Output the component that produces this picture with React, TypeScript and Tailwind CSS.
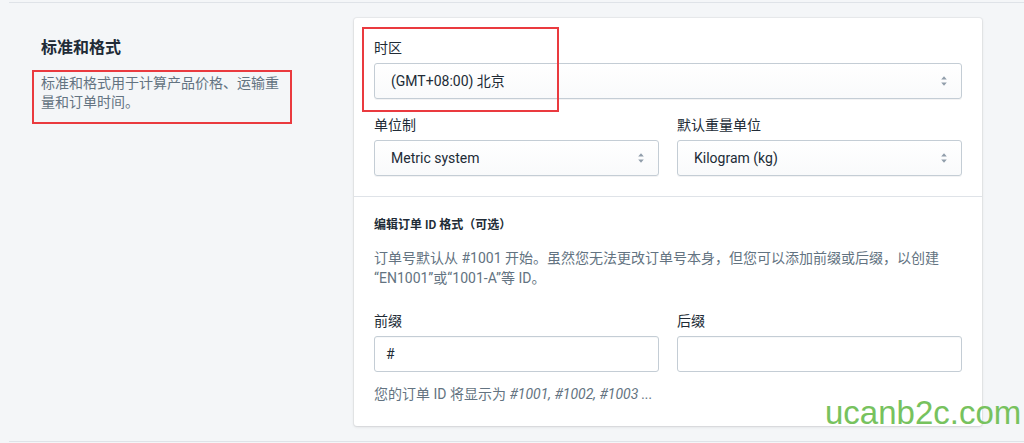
import React from 'react';

const font = "font-['Roboto','Noto_Sans_CJK_SC',sans-serif]";

function SelectArrows() {
  return (
    <svg viewBox="0 0 20 20" className="h-[16px] w-[16px] fill-[#919eab]">
      <path d="M10 16l-3.5-4h7L10 16zm0-12l3.5 4h-7L10 4z" />
    </svg>
  );
}

function SelectBox({ value }: { value: string }) {
  return (
    <div className="flex h-[36px] items-center justify-between rounded-[3px] border border-[#c4cdd5] bg-gradient-to-b from-white to-[#f9fafb] pl-[16px] pr-[9px] text-[14px] text-[#212b36] shadow-[0_1px_0_0_rgba(22,29,37,0.05)]">
      <span>{value}</span>
      <SelectArrows />
    </div>
  );
}

function Field({ label, children }: { label: string; children: React.ReactNode }) {
  return (
    <div className="flex flex-col gap-[5px]">
      <label className="text-[14px] leading-[20px] text-[#212b36]">{label}</label>
      {children}
    </div>
  );
}

function TextInput({ value }: { value?: string }) {
  return (
    <div className="flex h-[36px] items-center rounded-[3px] border border-[#c4cdd5] bg-white pl-[11px] text-[14px] text-[#212b36] shadow-[inset_0_1px_0_0_rgba(99,115,129,0.05)]">
      {value}
    </div>
  );
}

export default function App() {
  return (
    <div className={`relative h-[443px] overflow-hidden bg-[#f4f6f8] pt-[2px] ${font}`}>
      <div className="ml-[9px] flex border-y border-[#dfe3e8] pt-[15px] pb-[15px]">
        {/* left description */}
        <div className="w-[345px] shrink-0 pt-[20px] pl-[23px]">
          <h2 className="pl-[9px] text-[16px] font-semibold leading-[20px] text-[#212b36]">标准和格式</h2>
          <div className="mt-[12px] w-[260px] border-2 border-[#ea3a3f] pt-[2px] pr-[6px] pb-[10px] pl-[7px]">
            <p className="text-[14px] leading-[19px] text-[#637381]">
              标准和格式用于计算产品价格、运输重量和订单时间。
            </p>
          </div>
        </div>

        {/* card */}
        <div className="relative h-[408px] w-[628px] rounded-[3px] bg-white shadow-[0_0_0_1px_rgba(63,63,68,0.05),0_1px_3px_0_rgba(63,63,68,0.15)]">
          <div className="flex flex-col gap-[16px] border-b border-[#dfe3e8] p-[20px] pb-[20px]">
            <Field label="时区">
              <SelectBox value="(GMT+08:00) 北京" />
            </Field>
            <div className="grid grid-cols-2 gap-[18px]">
              <Field label="单位制">
                <SelectBox value="Metric system" />
              </Field>
              <Field label="默认重量单位">
                <SelectBox value="Kilogram (kg)" />
              </Field>
            </div>
          </div>

          <div className="px-[20px] pt-[20px]">
            <h3 className="text-[12px] font-semibold leading-[16px] text-[#212b36]">编辑订单 ID 格式（可选）</h3>
            <p className="mt-[15px] text-[14px] leading-[20px] text-[#637381]">
              订单号默认从 #1001 开始。虽然您无法更改订单号本身，但您可以添加前缀或后缀，以创建
              <br />
              “EN1001”或“1001-A”等 ID。
            </p>
            <div className="mt-[23px] grid grid-cols-2 gap-[18px]">
              <Field label="前缀">
                <TextInput value="#" />
              </Field>
              <Field label="后缀">
                <TextInput />
              </Field>
            </div>
            <p className="mt-[12px] text-[14px] leading-[20px] text-[#637381]">
              您的订单 ID 将显示为 <em className="italic">#1001, #1002, #1003 ...</em>
            </p>
          </div>

          {/* annotation box */}
          <div className="absolute left-[8px] top-[9px] h-[85px] w-[197px] border-2 border-[#ea3a3f]" />
        </div>
      </div>

      {/* watermark */}
      <div className="pointer-events-none absolute left-[825px] top-[390px] font-['Liberation_Sans',sans-serif] text-[33px] leading-[46px] text-[#77c25e]">
        ucanb2c.com
      </div>
    </div>
  );
}
